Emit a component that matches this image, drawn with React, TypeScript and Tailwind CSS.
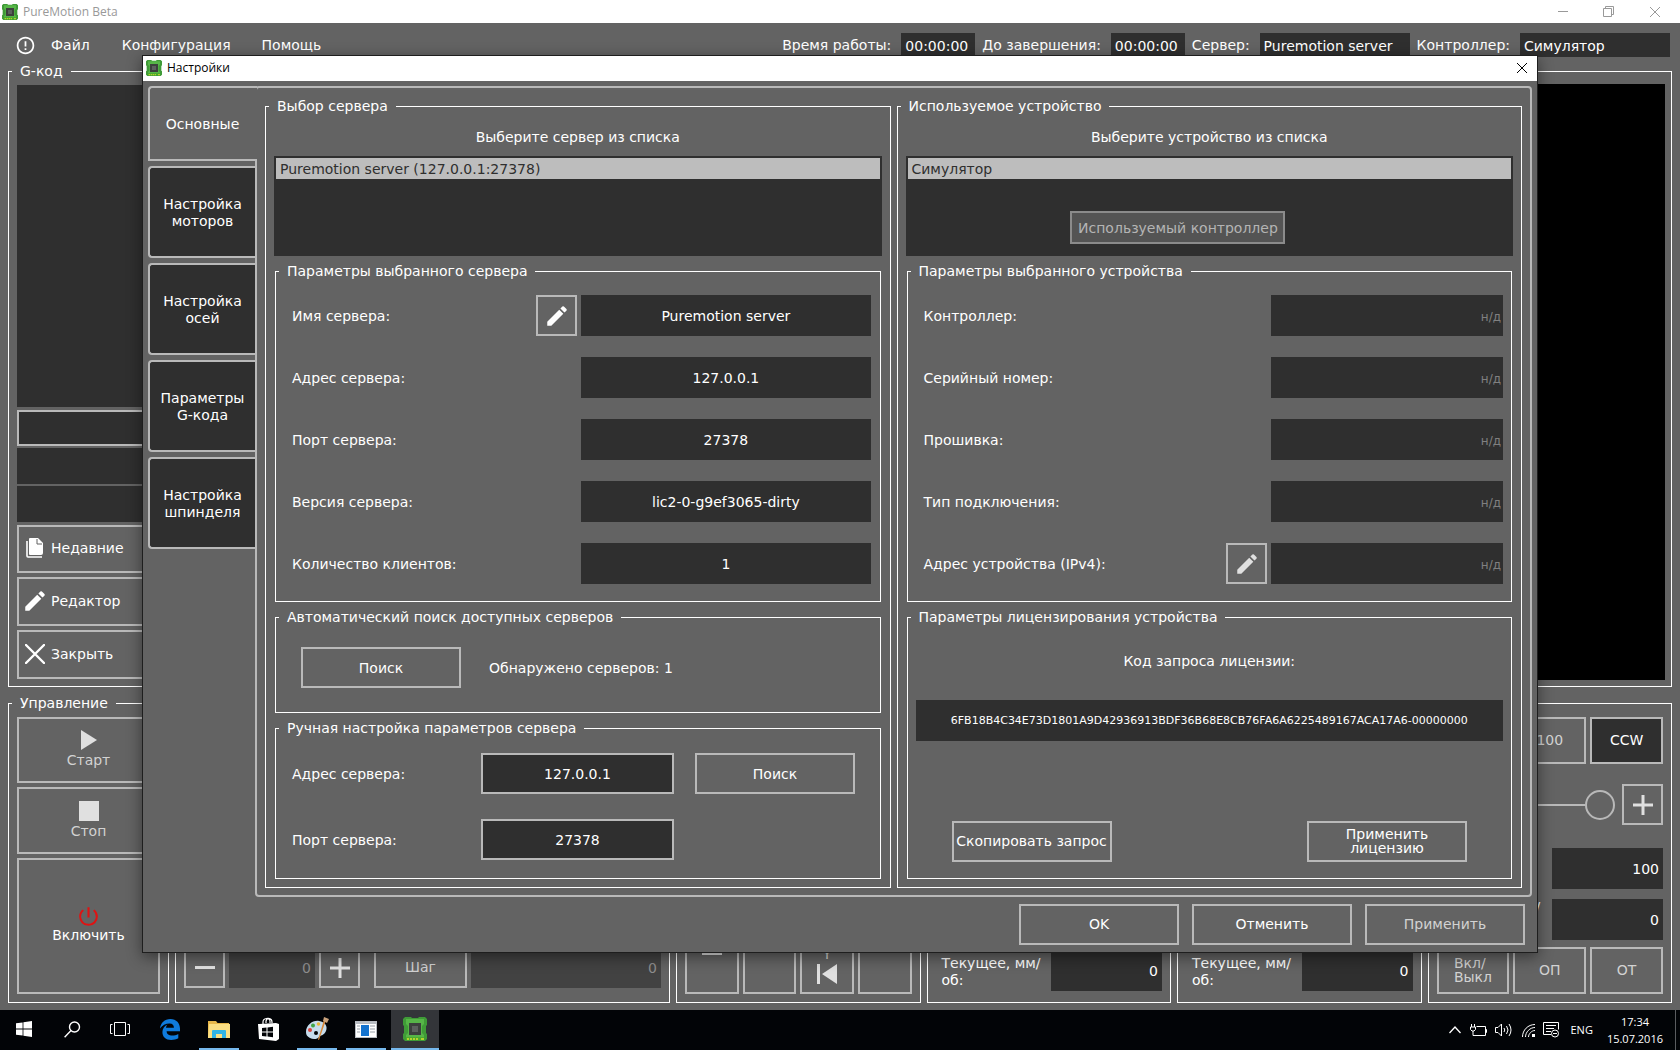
import React from 'react'
import { twMerge } from 'tailwind-merge'
import { MdEdit, MdPowerSettingsNew, MdErrorOutline } from 'react-icons/md'

interface BoxProps {
    children?: React.ReactNode
    className?: string
}

interface GroupProps extends BoxProps {
    title: string
}

const Group: React.FC<GroupProps> = ({ title, children, className }) => (
    <fieldset className="min-w-0 border border-white">
        <legend className="ml-[3px] px-2 leading-4">{title}</legend>
        <div className={className}>{children}</div>
    </fieldset>
)

interface ButtonProps extends React.ButtonHTMLAttributes<HTMLButtonElement> {}

const Button: React.FC<ButtonProps> = ({ className, children, ...props }) => (
    <button
        type="button"
        className={twMerge('flex h-[41px] w-40 items-center justify-center border-2 border-[#b9b9b9] bg-[#636363] text-white disabled:text-[#d2d2d2]', className)}
        {...props}
    >
        {children}
    </button>
)

const BoardIcon: React.FC<{ className?: string }> = ({ className }) => (
    <svg viewBox="0 0 24 24" className={className}>
        <path d="M2 0h6l1 1h6l1-1h6l2 2v6l-1 1v7l1 1v5l-2 2H2l-2-2v-5l1-1V9L0 8V2z" fill="#3f9b37" />
        <path d="M3 2h18v5l-2 2v7l2 2v2H3v-2l2-2V9L3 7z" fill="#57b648" />
        <path d="M3 20h18v3H3z" fill="#4cae2c" />
        <path d="M4 21h2v2H4zM7 21h2v2H7zM10 21h2v2h-2zM13 21h2v2h-2zM18 21h3v2h-3z" fill="#b4d22f" />
        <path d="M6 6h12v12H6z" fill="#3c403d" />
        <path d="M9 9h6v6H9z" fill="#5b605d" />
    </svg>
)

const CrossIcon: React.FC<{ className?: string }> = ({ className }) => (
    <svg viewBox="0 0 12 12" className={className} fill="none" stroke="currentColor">
        <path d="M1 1l10 10M11 1L1 11" />
    </svg>
)

const PlusIcon = () => (
    <svg viewBox="0 0 20 20" className="size-5" stroke="#e0e0e0" strokeWidth="3">
        <path d="M0 10h20M10 0v20" />
    </svg>
)

interface FieldProps {
    id: string
    label: string
    value?: string
    editable?: boolean
    dim?: boolean
    wide?: boolean
}

const Field: React.FC<FieldProps> = ({ id, label, value, editable, dim, wide }) => (
    <div className="flex h-[41px] items-center gap-1">
        <label htmlFor={id} className="flex-1">{label}</label>
        {editable && (
            <Button className="w-[41px]" disabled={dim} aria-label="Изменить">
                <MdEdit size={26} className={dim ? 'text-[#e0e0e0]' : 'text-white'} />
            </Button>
        )}
        <input
            id={id}
            readOnly
            value={value}
            placeholder="н/д"
            className={twMerge(
                'h-full bg-[#2f2f2f] text-center outline-none placeholder:text-xs placeholder:text-[#808080]',
                wide ? 'w-1/2' : 'w-2/5 pr-0.5 text-right'
            )}
        />
    </div>
)

const serverFields = [
    { id: 'name', label: 'Имя сервера:', value: 'Puremotion server', editable: true },
    { id: 'addr', label: 'Адрес сервера:', value: '127.0.0.1' },
    { id: 'port', label: 'Порт сервера:', value: '27378' },
    { id: 'version', label: 'Версия сервера:', value: 'lic2-0-g9ef3065-dirty' },
    { id: 'clients', label: 'Количество клиентов:', value: '1' },
]

const deviceFields = [
    { id: 'ctrl', label: 'Контроллер:' },
    { id: 'serial', label: 'Серийный номер:' },
    { id: 'firmware', label: 'Прошивка:' },
    { id: 'conn', label: 'Тип подключения:' },
    { id: 'ip', label: 'Адрес устройства (IPv4):', editable: true },
]

const tabs = ['Настройка моторов', 'Настройка осей', 'Параметры G-кода', 'Настройка шпинделя']

const ServerColumn = () => (
    <Group title="Выбор сервера" className="px-2 pb-2">
        <p className="mt-[13px] text-center leading-5">Выберите сервер из списка</p>
        <ul className="mt-[9px] h-[100px] bg-[#2f2f2f] p-0.5">
            <li className="h-[21px] bg-[#bdbdbd] px-1 leading-[22px] text-[#2f2f2f]">Puremotion server (127.0.0.1:27378)</li>
        </ul>
        <div className="mx-px mt-[7px] flex flex-col gap-[7px]">
            <Group title="Параметры выбранного сервера" className="flex flex-col gap-[21px] pt-4 pr-[9px] pb-[17px] pl-4">
                {serverFields.map((f) => <Field key={f.id} wide {...f} />)}
            </Group>
            <Group title="Автоматический поиск доступных серверов" className="flex items-center gap-7 pt-[22px] pb-6 pl-[25px]">
                <Button>Поиск</Button>
                <span>Обнаружено серверов: 1</span>
            </Group>
            <Group title="Ручная настройка параметров сервера" className="flex flex-col gap-[25px] pt-[17px] pb-[18px] pl-4">
                <div className="flex items-center">
                    <label htmlFor="manual-addr" className="w-[189px]">Адрес сервера:</label>
                    <input id="manual-addr" defaultValue="127.0.0.1" className="h-[41px] w-[193px] border-2 border-[#b9b9b9] bg-[#2f2f2f] text-center" />
                    <Button className="ml-[21px]">Поиск</Button>
                </div>
                <div className="flex items-center">
                    <label htmlFor="manual-port" className="w-[189px]">Порт сервера:</label>
                    <input id="manual-port" defaultValue="27378" className="h-[41px] w-[193px] border-2 border-[#b9b9b9] bg-[#2f2f2f] text-center" />
                </div>
            </Group>
        </div>
    </Group>
)

const DeviceColumn = () => (
    <Group title="Используемое устройство" className="px-2 pb-2">
        <p className="mt-[13px] text-center leading-5">Выберите устройство из списка</p>
        <div className="mt-[9px] h-[100px] bg-[#2f2f2f] p-0.5">
            <ul>
                <li className="h-[21px] bg-[#bdbdbd] px-1 leading-[22px] text-[#2f2f2f]">Симулятор</li>
            </ul>
            <Button disabled className="mt-8 ml-[27%] h-[33px] w-[215px] border-[#8b8b8b] bg-[#545454] disabled:text-[#b4b4b4]">Используемый контроллер</Button>
        </div>
        <div className="mx-px mt-[7px] flex flex-col gap-[7px]">
            <Group title="Параметры выбранного устройства" className="flex flex-col gap-[21px] pt-4 pr-2 pb-[17px] pl-4">
                {deviceFields.map((f) => <Field key={f.id} dim {...f} />)}
            </Group>
            <Group title="Параметры лицензирования устройства" className="px-2 pt-[26px] pb-4">
                <label htmlFor="license" className="block text-center leading-5">Код запроса лицензии:</label>
                <input
                    id="license"
                    readOnly
                    value="6FB18B4C34E73D1801A9D42936913BDF36B68E8CB76FA6A6225489167ACA17A6-00000000"
                    className="mt-[29px] h-[41px] w-full bg-[#2f2f2f] text-center text-[11px]"
                />
                <div className="mt-20 flex justify-between px-9">
                    <Button className="pb-0.5">Скопировать запрос</Button>
                    <Button className="px-6 pb-0.5 leading-[14px]">Применить лицензию</Button>
                </div>
            </Group>
        </div>
    </Group>
)

const SettingsDialog = () => (
    <div role="dialog" aria-label="Настройки" className="absolute top-[55px] right-[142px] left-[142px] border border-[#1e1e1e] bg-[#636363] shadow-[0_4px_14px_rgba(0,0,0,0.45)]">
        <div className="flex h-[25px] items-center bg-white pb-0.5 pl-[3px] font-['Open_Sans',sans-serif] text-xs text-black">
            <BoardIcon className="size-4" />
            <span className="ml-[5px] flex-1">Настройки</span>
            <button type="button" aria-label="Закрыть" className="mr-[9px]"><CrossIcon className="size-3" /></button>
        </div>
        <div className="flex pt-[5px] pr-[5px] pl-[5px]">
            <div role="tablist" className="flex w-[107px] shrink-0 flex-col gap-[5px]">
                <button type="button" role="tab" aria-selected="true" className="relative -mr-0.5 h-[75px] rounded-tl border-2 border-r-0 border-[#b9b9b9] bg-[#636363] pr-0.5">Основные</button>
                {tabs.map((t) => (
                    <button key={t} type="button" role="tab" aria-selected="false" className="h-[92px] rounded-l border-2 border-r-0 border-[#b9b9b9] bg-[#2f2f2f] px-2 pt-0.5 leading-[17px]">{t}</button>
                ))}
            </div>
            <div role="tabpanel" className="grid flex-1 grid-cols-2 gap-1.5 rounded border-2 border-[#b9b9b9] px-2 pt-[10px] pb-[7px]">
                <ServerColumn />
                <DeviceColumn />
            </div>
        </div>
        <div className="flex justify-end gap-[13px] pt-[7px] pr-3 pb-[7px]">
            <Button className="pb-0.5">OK</Button>
            <Button className="pb-0.5">Отменить</Button>
            <Button disabled className="pb-0.5">Применить</Button>
        </div>
    </div>
)

const StatusItem: React.FC<{ label: string; value: string; className?: string }> = ({ label, value, className }) => (
    <div className="flex items-center">
        <span className="mr-[10px]">{label}</span>
        <output className={twMerge('h-6 w-[74px] bg-[#2f2f2f] pl-1 leading-[26px]', className)}>{value}</output>
    </div>
)

const MenuBar = () => (
    <div className="flex h-10 items-start pt-[10px] pr-[10px] pl-[15px]">
        <div className="flex h-6 flex-1 items-center">
            <MdErrorOutline size={21} className="mr-[15px]" />
            <button type="button" className="mr-8">Файл</button>
            <button type="button" className="mr-[31px]">Конфигурация</button>
            <button type="button">Помощь</button>
        </div>
        <div className="flex gap-[7px]">
            <StatusItem label="Время работы:" value="00:00:00" />
            <StatusItem label="До завершения:" value="00:00:00" />
            <StatusItem label="Сервер:" value="Puremotion server" className="w-[150px]" />
            <StatusItem label="Контроллер:" value="Симулятор" className="w-[150px]" />
        </div>
    </div>
)

const Workspace = () => (
    <div className="flex h-[624px] gap-1.5 px-2">
        <fieldset className="w-2/5 border border-white">
            <legend className="ml-[3px] px-2 leading-4">G-код</legend>
            <div className="flex flex-col px-2 pt-1.5">
                <div className="h-[322px] bg-[#2f2f2f]" />
                <input aria-label="Команда" className="mt-[3px] h-9 border-2 border-[#b9b9b9] bg-[#2f2f2f]" />
                <div className="mt-0.5 h-9 bg-[#2f2f2f]" />
                <div className="mt-0.5 h-9 bg-[#2f2f2f]" />
                <Button className="mt-[3px] h-12 w-full justify-start gap-[7px] pb-0.5 pl-[7px]">
                    <svg viewBox="0 0 18 20" className="h-5 w-[18px]">
                        <path d="M4 0h8l5 5v10a2 2 0 0 1-2 2H4a1 1 0 0 1-1-1V1a1 1 0 0 1 1-1z" fill="#fff" />
                        <path d="M11 1v5h5" fill="none" stroke="#636363" />
                        <path d="M1 3v15a1 1 0 0 0 1 1h14" fill="none" stroke="#fff" strokeWidth="1.6" />
                    </svg>
                    Недавние
                </Button>
                <Button className="mt-1 h-[49px] w-full justify-start gap-[3px] pb-0.5 pl-[3px]"><MdEdit size={26} />Редактор</Button>
                <Button className="mt-1 h-[49px] w-full justify-start gap-1.5 pb-0.5 pl-1.5">
                    <svg viewBox="0 0 20 20" className="size-5" stroke="#fff" strokeWidth="2.4" strokeLinecap="round"><path d="M1 1l18 18M19 1L1 19" /></svg>
                    Закрыть
                </Button>
            </div>
        </fieldset>
        <div className="mt-2 flex-1 border border-white px-1.5 pt-3 pb-1.5">
            <div className="h-full bg-black" />
        </div>
    </div>
)

const Panel: React.FC<BoxProps> = ({ children, className }) => (
    <div className={twMerge('mt-2 flex min-w-0 border border-white px-2 pb-2', className)}>{children}</div>
)

const FeedPanel: React.FC<{ id: string }> = ({ id }) => (
    <Panel className="items-end pb-[11px] pl-[14px]">
        <label htmlFor={id} className="flex-1 pb-0.5 leading-[17px]">Текущее, мм/ об:</label>
        <input id={id} readOnly value="0" className="h-[41px] w-[111px] bg-[#2f2f2f] pr-1 text-right" />
    </Panel>
)

const ControlRow = () => (
    <div className="mt-2 grid h-[308px] grid-cols-[161px_repeat(6,1fr)] gap-1.5 px-2">
        <fieldset className="min-w-0 border border-white">
            <legend className="ml-[3px] px-2 leading-4">Управление</legend>
            <div className="flex flex-col gap-1 px-2 pt-1.5">
                <Button disabled className="h-[66px] w-full flex-col gap-0.5 pb-0.5 leading-4">
                    <svg viewBox="0 0 16 20" className="h-5 w-4"><path d="M0 0l16 10L0 20z" fill="#e0e0e0" /></svg>
                    Старт
                </Button>
                <Button disabled className="h-[67px] w-full flex-col gap-0.5 pb-0.5 leading-4"><span className="size-5 bg-[#e0e0e0]" />Стоп</Button>
                <Button className="h-[136px] w-full flex-col pb-2 leading-3"><MdPowerSettingsNew size={25} className="text-[#e01212]" />Включить</Button>
            </div>
        </fieldset>
        <Panel className="col-span-2 items-end gap-1 pb-[14px]">
            <Button disabled aria-label="Уменьшить" className="w-[41px]"><span className="h-[3px] w-5 bg-[#e0e0e0]" /></Button>
            <input aria-label="Скорость" readOnly value="0" className="h-[41px] w-[86px] bg-[#424242] pr-1 text-right text-[#8e8e8e]" />
            <Button disabled aria-label="Увеличить" className="w-[41px]"><PlusIcon /></Button>
            <Button disabled className="ml-2.5 w-[93px] pb-0.5">Шаг</Button>
            <input aria-label="Размер шага" readOnly value="0" className="h-[41px] min-w-0 flex-1 bg-[#424242] pr-1 text-right text-[#8e8e8e]" />
        </Panel>
        <Panel className="items-end gap-1">
            <Button disabled aria-label="Вниз" className="h-[60px] w-auto flex-1 items-start pt-[15px]"><span className="h-1 w-5 bg-[#e0e0e0]" /></Button>
            <Button disabled aria-label="X" className="h-[60px] w-auto flex-1" />
            <Button disabled className="h-[60px] w-auto flex-1 flex-col justify-end gap-[3px] pb-2 leading-[14px]">
                Y
                <svg viewBox="0 0 20 20" className="size-5" fill="#e0e0e0"><path d="M0 0h3v20H0zM20 0v20L5 10z" /></svg>
            </Button>
            <Button disabled aria-label="Z" className="h-[60px] w-auto flex-1" />
        </Panel>
        <FeedPanel id="feed-x" />
        <FeedPanel id="feed-y" />
        <Panel className="flex-col items-end pt-[13px]">
            <div className="grid w-full grid-cols-3 gap-1">
                <Button disabled className="h-[47px] w-auto pb-0.5">10</Button>
                <Button disabled className="h-[47px] w-auto pb-0.5">100</Button>
                <Button className="h-[47px] w-auto bg-[#2f2f2f] pb-0.5">CCW</Button>
            </div>
            <div className="mt-5 flex w-full items-center">
                <input
                    type="range"
                    aria-label="Обороты"
                    defaultValue={100}
                    className="h-[30px] min-w-0 flex-1 appearance-none bg-[linear-gradient(#b9b9b9,#b9b9b9)] bg-size-[calc(100%-30px)_2px] bg-left bg-no-repeat [&::-webkit-slider-thumb]:size-[30px] [&::-webkit-slider-thumb]:appearance-none [&::-webkit-slider-thumb]:rounded-full [&::-webkit-slider-thumb]:border-2 [&::-webkit-slider-thumb]:border-[#b9b9b9]"
                />
                <Button aria-label="Больше" className="ml-[7px] w-[41px]"><PlusIcon /></Button>
            </div>
            <input aria-label="Задано" readOnly value="100" className="mt-[23px] h-[41px] w-[111px] bg-[#2f2f2f] pr-1 text-right" />
            <div className="mt-2.5 flex w-full justify-end">
                <label htmlFor="rpm" className="flex-1 pl-2 leading-[17px] whitespace-nowrap">Текущие, об/</label>
                <input id="rpm" readOnly value="0" className="h-[41px] w-[111px] bg-[#2f2f2f] pr-1 text-right" />
            </div>
            <div className="mt-[7px] grid w-full grid-cols-3 gap-1">
                <Button disabled className="h-[47px] w-auto px-4 pb-0.5 text-left leading-[14px]">Вкл/ Выкл</Button>
                <Button disabled className="h-[47px] w-auto pb-0.5">ОП</Button>
                <Button disabled className="h-[47px] w-auto pb-0.5">ОТ</Button>
            </div>
        </Panel>
    </div>
)

interface TaskProps {
    label: string
    running?: boolean
    active?: boolean
    children: React.ReactNode
}

const Task: React.FC<TaskProps> = ({ label, running, active, children }) => (
    <button type="button" aria-label={label} className={twMerge('flex h-10 w-12 flex-col items-center', active && 'bg-[#333539]')}>
        <span className="flex h-[38px] items-center">{children}</span>
        {running && <span className={active ? 'h-0.5 w-full bg-[#76b9ed]' : 'h-0.5 w-10 bg-[#76b9ed]'} />}
    </button>
)

const Taskbar = () => (
    <div className="flex h-10 items-center bg-[#020407] font-['Open_Sans',sans-serif] text-[11px] text-white">
        <div className="flex">
            <Task label="Пуск">
                <svg viewBox="0 0 16 16" className="size-4" fill="#fff"><path d="M0 2.3L6.6 1.4v6.2H0zM7.4 1.3L16 0v7.6H7.4zM0 8.4h6.6v6.2L0 13.7zM7.4 8.4H16V16l-8.6-1.2z" /></svg>
            </Task>
            <Task label="Поиск">
                <svg viewBox="0 0 17 17" className="size-[17px]" fill="none" stroke="#fff" strokeWidth="1.4"><circle cx="10.5" cy="6" r="5" /><path d="M7 9.6L.6 16.2" /></svg>
            </Task>
            <Task label="Представление задач">
                <svg viewBox="0 0 20 14" className="h-[14px] w-5" fill="none" stroke="#fff"><path d="M4.5.5h11v13h-11zM2.5 2.5h-2v9h2M17.5 2.5h2v9h-2" /></svg>
            </Task>
        </div>
        <div className="ml-0.5 flex gap-px">
            <Task label="Edge">
                <svg viewBox="0 0 20 21" className="h-[21px] w-5" fill="#0f7bdc"><path d="M0 9.4C.6 4 4.6 0 10.3 0 16.5 0 20 4.4 20 9.8v2.5H6.6c.1 2.9 2.6 4.3 5.5 4.3 2.3 0 4.3-.6 6.2-1.7v4.4c-2 1.1-4.4 1.7-7.1 1.7-5.5 0-8.8-3.2-8.8-8 0-3.5 2-6.2 5.2-7.600-1 .9-1.400 2-1.600 3.400h7.900c0-2.700-1.300-4.400-4.300-4.400C5.800 4.400 2 6.300 0 9.400z" /></svg>
            </Task>
            <Task label="Проводник" running>
                <svg viewBox="0 0 22 19" className="h-[19px] w-[22px]">
                    <path d="M0 1h8l1.5 2H21v15H0z" fill="#e8b84a" />
                    <path d="M1 4h21v14H0z" fill="#fbdf83" />
                    <path d="M4 18v-7a1 1 0 0 1 1-1h12a1 1 0 0 1 1 1v7h-4v-4H8v4z" fill="#31b4e6" />
                </svg>
            </Task>
            <Task label="Магазин">
                <svg viewBox="0 0 21 24" className="h-6 w-[21px]">
                    <path d="M5 7V5c0-4 7-5 7-1v2M8 6V4c1-4 6-3 6 1v1" fill="none" stroke="#fff" strokeWidth="1.2" />
                    <path d="M0 7h1l17-1 3 1v15l-3 2-17-2z" fill="#fff" />
                    <path d="M4 11l4.500-.5v4H4zM9.500 10.400l5.500-.6v4.700H9.500zM4 15.500h4.500v4L4 19zM9.500 15.500H15v4.700l-5.500-.6z" fill="#020407" />
                </svg>
            </Task>
            <Task label="Paint" running>
                <svg viewBox="0 0 25 24" className="h-6 w-[25px]">
                    <path d="M1 15C1 8 8 3 14 4s9 5 7 10-6 4-7 6-6 3-9 1-4-3-4-6z" fill="#c6dcec" />
                    <circle cx="5" cy="13" r="2" fill="#d8443c" />
                    <circle cx="8" cy="8.5" r="2" fill="#3fa648" />
                    <circle cx="13.5" cy="7" r="1.8" fill="#e8b53a" />
                    <circle cx="11" cy="16" r="2" fill="#020407" />
                    <path d="M21 3l-7 20-1-.4L19 3z" fill="#d98b3c" />
                    <path d="M18 4l1-4 5 2-2 4z" fill="#c9a27c" />
                </svg>
            </Task>
            <Task label="Окно" running>
                <svg viewBox="0 0 22 17" className="h-[17px] w-[22px]">
                    <path d="M0 0h22v17H0z" fill="#b8bcc2" />
                    <path d="M1 3h20v13H1z" fill="#fff" />
                    <path d="M6 4h8v11H6z" fill="#1473cf" />
                    <path d="M2 5h3M2 8h3M2 11h3M15 5h5M15 8h5M15 11h5" stroke="#9aa1a9" />
                </svg>
            </Task>
            <Task label="PureMotion" running active><BoardIcon className="size-6" /></Task>
        </div>
        <div className="ml-auto flex items-center">
            <svg viewBox="0 0 12 8" className="mr-[9px] h-2 w-3" fill="none" stroke="#fff" strokeWidth="1.3"><path d="M.5 7L6 1l5.5 6" /></svg>
            <svg viewBox="0 0 17 13" className="mr-2 h-[13px] w-[17px]" fill="none" stroke="#fff"><path d="M6.5 2.5h9v9h-9M15.5 5.5h1v3h-1M1.5 0v3M4.5 0v3M.5 3h5v2.5L4 7H2L.5 5.5zM3 7v4.5h4" /></svg>
            <svg viewBox="0 0 17 14" className="mr-2.5 h-[14px] w-[17px]" fill="none" stroke="#fff"><path d="M.5 4.5H3L6.5 1v12L3 9.5H.5zM9 5q1.5 2 0 4M11.5 3q3 4 0 8M14 1q4 6 0 12" /></svg>
            <svg viewBox="0 0 13 13" className="mr-2 size-[13px]" fill="none" stroke="#fff"><path d="M.5 13C.5 6 6 .5 13 .5M3.5 13C3.5 8 8 3.500 13 3.500M6.500 13c0-3 3-6.500 6.500-6.500" /><path d="M10 10h3v3h-3z" fill="#fff" stroke="none" /></svg>
            <svg viewBox="0 0 17 16" className="mr-2.5 h-4 w-[17px]" fill="none" stroke="#fff"><path d="M8 12.5H.5V.5h15v7M3 3.5h10M3 6.5h8M3 9.5h5" /><circle cx="12" cy="11.5" r="3.5" /><path d="M10 11.5h4" /></svg>
            <span className="mr-[14px]">ENG</span>
            <div className="mr-3 text-center leading-[17px]">
                <div>17:34</div>
                <div>15.07.2016</div>
            </div>
            <div className="mr-1 h-10 w-px bg-[#5a5c5f]" />
        </div>
    </div>
)

const App = () => (
    <div className="relative flex min-h-screen flex-col overflow-hidden bg-[#636363] font-['DejaVu_Sans',sans-serif] text-sm text-white">
        <div className="flex h-[23px] items-center bg-white pl-0.5 font-['Open_Sans',sans-serif] text-xs text-[#999]">
            <BoardIcon className="size-4" />
            <span className="ml-[5px] flex-1">PureMotion Beta</span>
            <div className="mr-[19px] flex gap-[35px]">
                <button type="button" aria-label="Свернуть"><span className="block h-px w-2.5 bg-[#999]" /></button>
                <button type="button" aria-label="Восстановить">
                    <svg viewBox="0 0 11 11" className="size-[11px]" fill="none" stroke="#999"><path d="M.5 2.5h8v8h-8zM2.5 2.5v-2h8v8h-2" /></svg>
                </button>
                <button type="button" aria-label="Выход"><CrossIcon className="size-3" /></button>
            </div>
        </div>
        <MenuBar />
        <Workspace />
        <ControlRow />
        <div className="min-h-[7px] flex-1" />
        <Taskbar />
        <SettingsDialog />
    </div>
)

export default App
